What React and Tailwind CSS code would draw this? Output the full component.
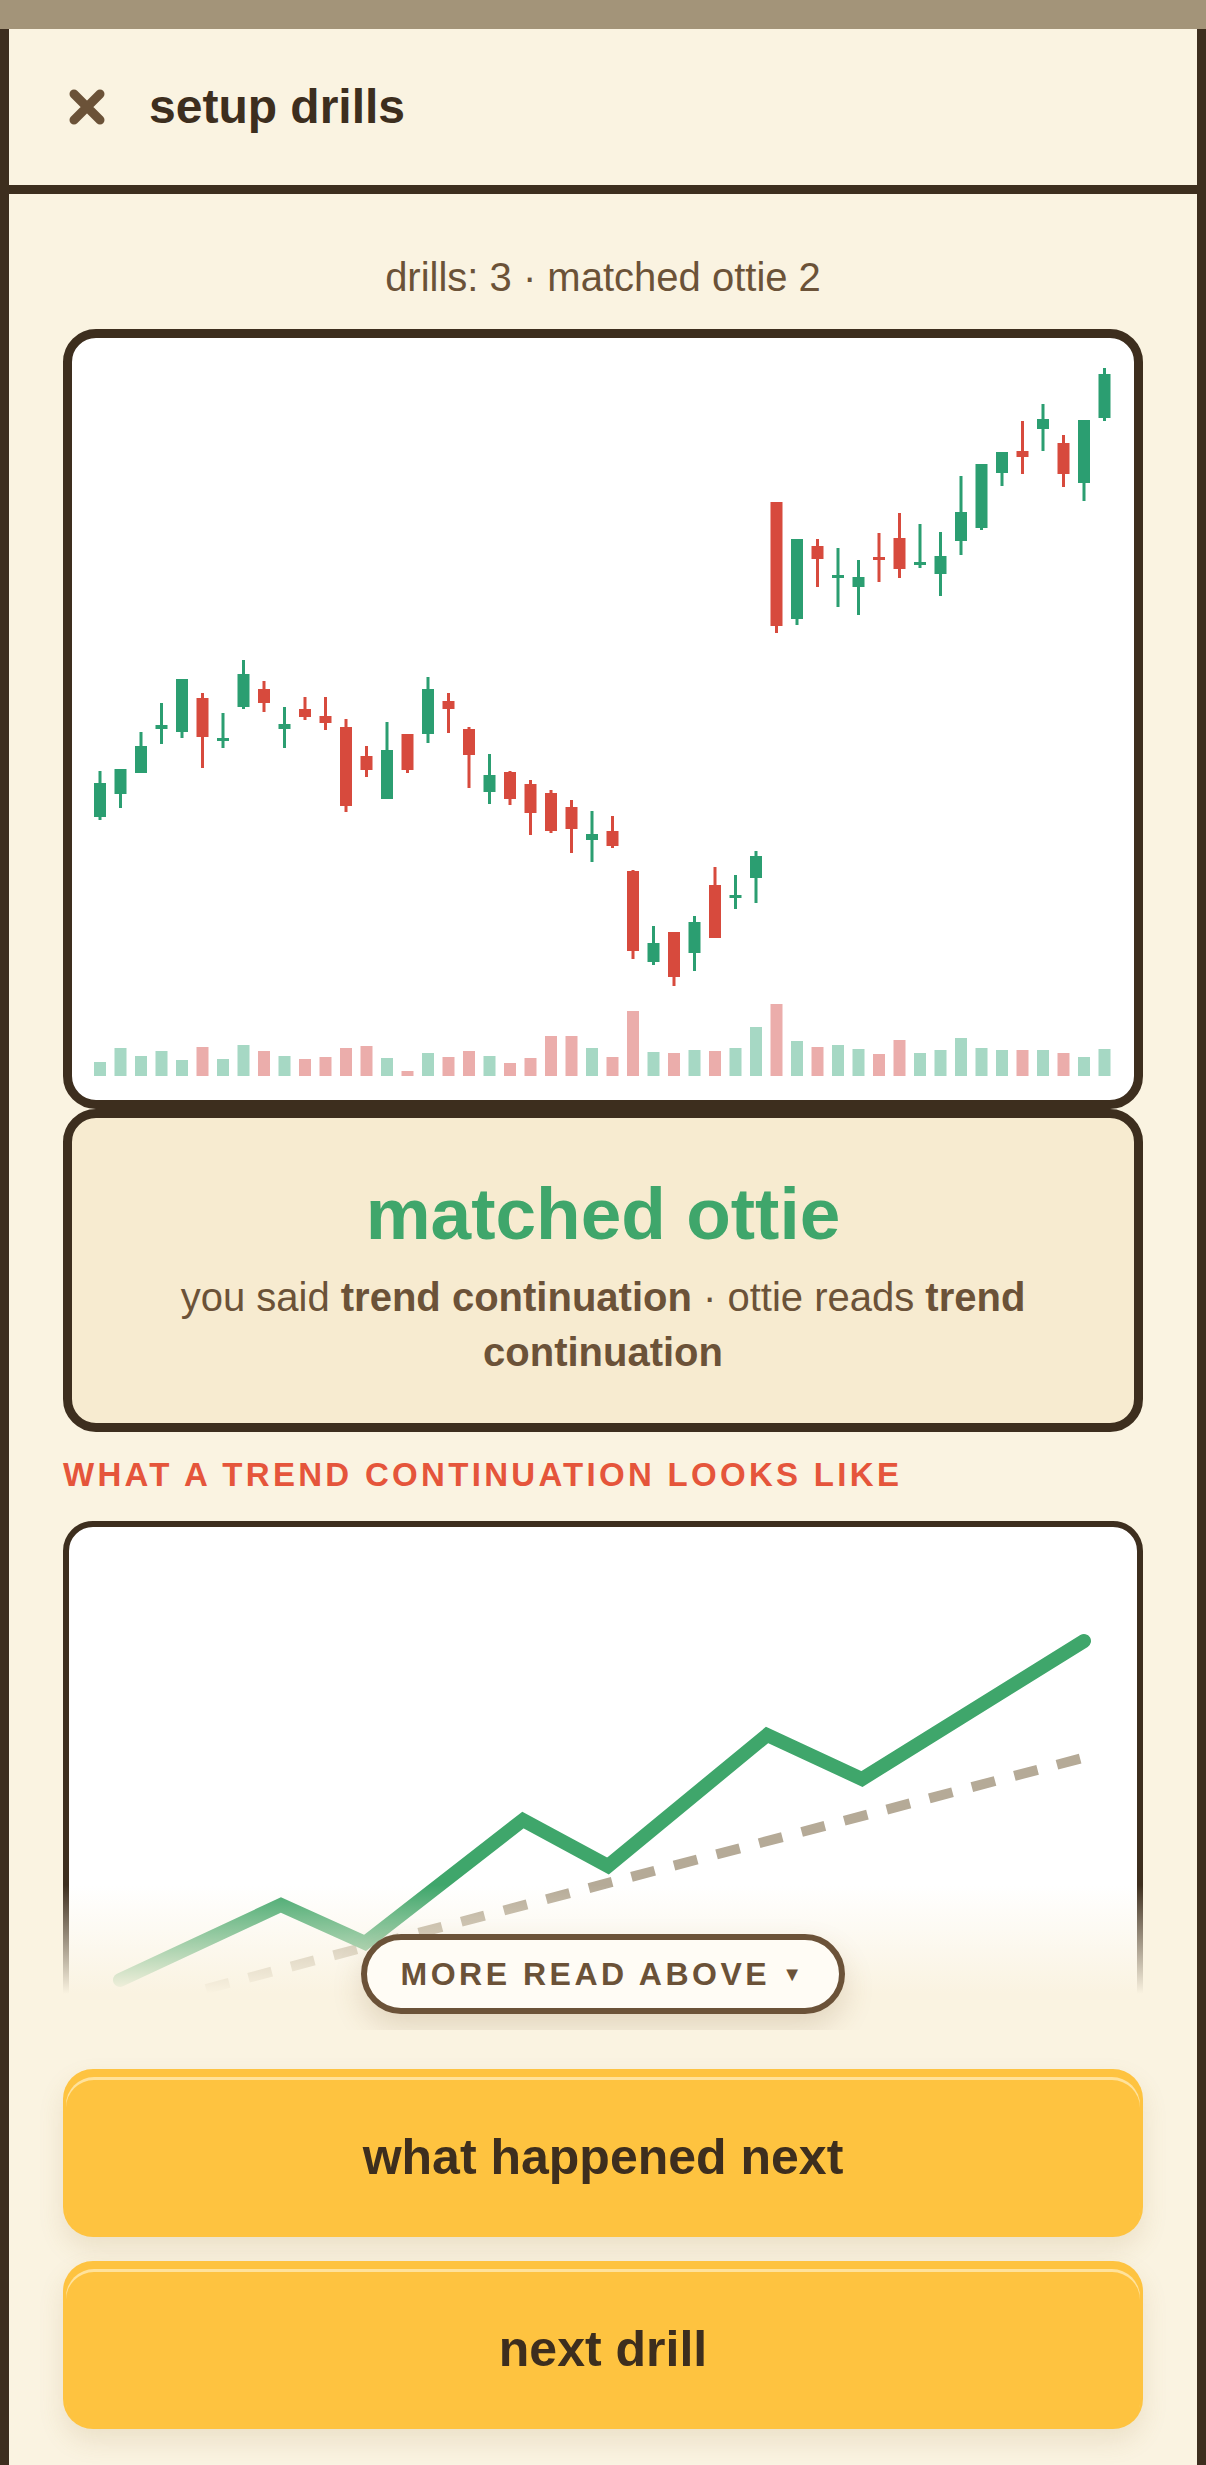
import { useState } from "react";

/**
 * Setup drills result screen
 * Candle chart of the drill, verdict card, and a sketch of the pattern.
 */

// [colour, bodyTop, bodyBottom, wickTop, wickBottom] in page pixels
const candles = [
  ["g", 783, 817, 771, 820],
  ["g", 769, 794, 769, 808],
  ["g", 746, 773, 732, 773],
  ["g", 725, 729, 703, 744],
  ["g", 679, 732, 679, 738],
  ["r", 698, 737, 693, 768],
  ["g", 738, 741, 713, 748],
  ["g", 674, 707, 660, 709],
  ["r", 689, 703, 681, 712],
  ["g", 724, 729, 707, 748],
  ["r", 709, 717, 697, 720],
  ["r", 716, 723, 697, 730],
  ["r", 727, 806, 719, 812],
  ["r", 756, 770, 746, 777],
  ["g", 750, 799, 722, 799],
  ["r", 734, 770, 734, 773],
  ["g", 689, 734, 677, 743],
  ["r", 701, 709, 693, 733],
  ["r", 729, 755, 727, 788],
  ["g", 775, 792, 754, 804],
  ["r", 772, 799, 771, 805],
  ["r", 784, 813, 780, 835],
  ["r", 793, 831, 790, 833],
  ["r", 807, 829, 800, 853],
  ["g", 834, 840, 811, 862],
  ["r", 831, 846, 816, 848],
  ["r", 871, 951, 870, 959],
  ["g", 943, 962, 926, 965],
  ["r", 932, 977, 932, 986],
  ["g", 922, 953, 916, 971],
  ["r", 885, 938, 867, 938],
  ["g", 895, 898, 875, 909],
  ["g", 856, 878, 851, 903],
  ["r", 502, 626, 502, 633],
  ["g", 539, 619, 539, 625],
  ["r", 546, 559, 539, 587],
  ["g", 575, 577, 548, 607],
  ["g", 577, 587, 560, 615],
  ["r", 557, 559, 533, 582],
  ["r", 538, 569, 513, 578],
  ["g", 562, 564, 524, 568],
  ["g", 556, 574, 532, 596],
  ["g", 512, 541, 476, 555],
  ["g", 464, 528, 464, 530],
  ["g", 452, 473, 452, 486],
  ["r", 451, 457, 421, 474],
  ["g", 419, 429, 404, 451],
  ["r", 443, 474, 435, 487],
  ["g", 420, 483, 420, 501],
  ["g", 374, 418, 368, 421],
];

const volumes = [
  14, 28, 20, 25, 16, 29, 17, 31, 25, 20, 17, 19, 28, 30, 18, 5, 23, 19, 25, 20,
  13, 18, 40, 40, 28, 19, 65, 24, 23, 26, 25, 28, 49, 72, 35, 29, 31, 27, 22, 36,
  23, 26, 38, 28, 26, 26, 26, 23, 19, 27,
];

function CandleChart() {
  return (
    <svg width="1062" height="762" viewBox="72 338 1062 762" className="block">
      {candles.map(([c, bt, bb, wt, wb], i) => {
        const x = 100 + 20.5 * i;
        const col = c === "g" ? "#2b9e71" : "#d74a3d";
        const vcol = c === "g" ? "#a6d8c4" : "#ebadab";
        return (
          <g key={i}>
            <rect x={x - 6} y={1076 - volumes[i]} width="12" height={volumes[i]} fill={vcol} />
            <rect x={x - 1.5} y={wt} width="3" height={wb - wt} fill={col} />
            <rect x={x - 6} y={bt} width="12" height={Math.max(bb - bt, 3)} fill={col} />
          </g>
        );
      })}
    </svg>
  );
}

function TrendSketch() {
  return (
    <svg width="1068" height="640" viewBox="69 1527 1068 640" className="block">
      <line x1="206" y1="1989" x2="1090" y2="1756" stroke="#b5aa97" strokeWidth="10" strokeDasharray="24 20" />
      <polyline
        points="120,1980 281,1905 365,1943 523,1820 608,1866 767,1735 862,1779 1084,1641"
        fill="none"
        stroke="#3fa66b"
        strokeWidth="14"
        strokeLinejoin="miter"
        strokeLinecap="round"
      />
    </svg>
  );
}

function BigButton({ children }) {
  return (
    <button className="h-[168px] w-full rounded-[30px] bg-[#fec340] pt-[8px] px-[3px] shadow-[0_12px_26px_rgba(150,110,50,0.14)]">
      <div className="h-full rounded-[28px] shadow-[inset_0_3px_0_#ffe29b] flex items-center justify-center text-[50px] font-bold text-[#3d2e1e]">
        {children}
      </div>
    </button>
  );
}

export default function App() {
  const [open, setOpen] = useState(true);

  return (
    <div className="w-[1206px] h-[2465px] flex flex-col bg-[#faf3e1] font-['Liberation_Sans',Arial,sans-serif]">
      <div className="h-[29px] shrink-0 bg-[#a39479]" />

      <div className="flex-1 min-h-0 flex flex-col border-x-[9px] border-[#3d2e1e]">
        {/* header */}
        <div className="h-[165px] shrink-0 border-b-[9px] border-[#3d2e1e] flex items-center pl-[60px] gap-[44px]">
          <button onClick={() => setOpen(!open)} className="w-[36px] h-[36px]">
            <svg viewBox="0 0 36 36" width="36" height="36">
              <path d="M5 5 L31 31 M31 5 L5 31" stroke="#6b5238" strokeWidth="9" strokeLinecap="round" />
            </svg>
          </button>
          <h1 className="text-[48px] font-bold text-[#3d2e1e] leading-none">setup drills</h1>
        </div>

        {/* scrolling read */}
        <div className="relative flex-1 min-h-0 overflow-hidden">
          <div className="px-[54px] pt-[55px] flex flex-col">
            <p className="text-center text-[40px] leading-[56px] text-[#6b5238] mb-[24px]">
              drills: 3 · matched ottie 2
            </p>

            <div className="h-[780px] rounded-[33px] border-[9px] border-[#3d2e1e] bg-white overflow-hidden">
              <CandleChart />
            </div>

            <div className="rounded-[33px] border-[9px] border-[#3d2e1e] bg-[#f7ebd0] px-[48px] pt-[53px] pb-[43px] text-center">
              <h2 className="text-[73px] leading-[86px] font-bold text-[#3fa66b]">matched ottie</h2>
              <p className="mt-[13px] text-[40px] leading-[55px] text-[#6b5238]">
                you said <span className="font-bold">trend continuation</span> · ottie reads{" "}
                <span className="font-bold">trend continuation</span>
              </p>
            </div>

            <h3 className="mt-[23px] text-[33px] leading-[40px] font-bold tracking-[3.3px] uppercase text-[#e5553b]">
              what a trend continuation looks like
            </h3>

            <div className="mt-[26px] h-[652px] rounded-[30px] border-[6px] border-[#3d2e1e] bg-white overflow-hidden">
              <TrendSketch />
            </div>
          </div>

          <div className="pointer-events-none absolute inset-x-0 bottom-0 h-[145px] bg-[linear-gradient(to_bottom,rgba(250,243,225,0)_0%,#faf3e1_75%)]" />

          <button className="absolute bottom-[16px] left-1/2 -translate-x-1/2 w-[484px] h-[80px] rounded-full border-[6px] border-[#6b5238] bg-[#fffcf5] shadow-[0_14px_30px_rgba(120,85,40,0.18)] flex items-center justify-center gap-[12px] text-[32px] font-bold tracking-[3.5px] text-[#6b5238]">
            MORE READ ABOVE <span className="text-[20px]">▼</span>
          </button>
        </div>

        {/* actions */}
        <div className="shrink-0 px-[54px] pt-[39px] pb-[36px] flex flex-col gap-[24px]">
          <BigButton>what happened next</BigButton>
          <BigButton>next drill</BigButton>
        </div>
      </div>
    </div>
  );
}
